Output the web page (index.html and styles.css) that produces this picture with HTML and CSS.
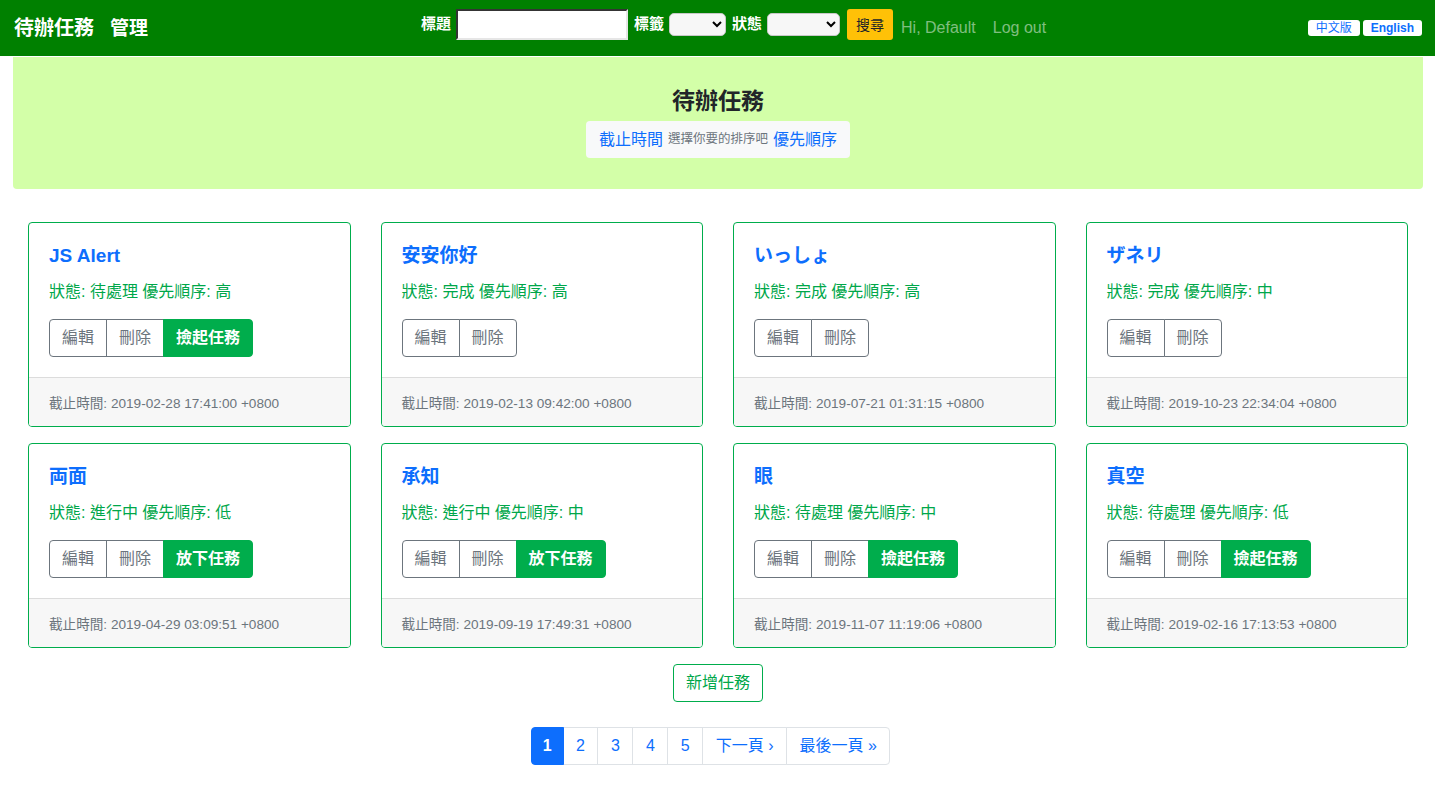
FILE: index.html
```html
<!DOCTYPE html>
<html lang="zh-Hant">
<head>
<meta charset="utf-8">
<title>待辦任務</title>
<link rel="stylesheet" href="styles.css">
</head>
<body>
<nav class="navbar">
  <a class="brand" href="#">待辦任務</a>
  <a class="nav-main" href="#">管理</a>
  <form class="search">
    <label class="lbl">標題</label>
    <input class="txt" type="text">
    <label class="lbl">標籤</label>
    <select class="sel sel-tag"><option></option></select>
    <label class="lbl">狀態</label>
    <select class="sel sel-state"><option></option></select>
    <button class="btn-search" type="button">搜尋</button>
  </form>
  <span class="nav-link">Hi, Default</span>
  <a class="nav-link" href="#">Log out</a>
  <div class="lang">
    <a class="lang-btn" href="#">中文版</a>
    <a class="lang-btn lang-en" href="#">English</a>
  </div>
</nav>

<header class="jumbo">
  <h1 class="jumbo-title">待辦任務</h1>
  <div class="sort-box">
    <a href="#" class="sort-link">截止時間</a>
    <small class="sort-hint">選擇你要的排序吧</small>
    <a href="#" class="sort-link">優先順序</a>
  </div>
</header>

<main class="content">
  <div class="cards">
    <div class="card">
      <div class="card-body">
        <h5 class="card-title">JS Alert</h5>
        <p class="card-status">狀態: 待處理 優先順序: 高</p>
        <div class="btn-group"><a class="btn btn-outline">編輯</a><a class="btn btn-outline">刪除</a><a class="btn btn-success">撿起任務</a></div>
      </div>
      <div class="card-footer">截止時間: 2019-02-28 17:41:00 +0800</div>
    </div>
    <div class="card">
      <div class="card-body">
        <h5 class="card-title">安安你好</h5>
        <p class="card-status">狀態: 完成 優先順序: 高</p>
        <div class="btn-group"><a class="btn btn-outline">編輯</a><a class="btn btn-outline">刪除</a></div>
      </div>
      <div class="card-footer">截止時間: 2019-02-13 09:42:00 +0800</div>
    </div>
    <div class="card">
      <div class="card-body">
        <h5 class="card-title">いっしょ</h5>
        <p class="card-status">狀態: 完成 優先順序: 高</p>
        <div class="btn-group"><a class="btn btn-outline">編輯</a><a class="btn btn-outline">刪除</a></div>
      </div>
      <div class="card-footer">截止時間: 2019-07-21 01:31:15 +0800</div>
    </div>
    <div class="card">
      <div class="card-body">
        <h5 class="card-title">ザネリ</h5>
        <p class="card-status">狀態: 完成 優先順序: 中</p>
        <div class="btn-group"><a class="btn btn-outline">編輯</a><a class="btn btn-outline">刪除</a></div>
      </div>
      <div class="card-footer">截止時間: 2019-10-23 22:34:04 +0800</div>
    </div>
    <div class="card">
      <div class="card-body">
        <h5 class="card-title">両面</h5>
        <p class="card-status">狀態: 進行中 優先順序: 低</p>
        <div class="btn-group"><a class="btn btn-outline">編輯</a><a class="btn btn-outline">刪除</a><a class="btn btn-success">放下任務</a></div>
      </div>
      <div class="card-footer">截止時間: 2019-04-29 03:09:51 +0800</div>
    </div>
    <div class="card">
      <div class="card-body">
        <h5 class="card-title">承知</h5>
        <p class="card-status">狀態: 進行中 優先順序: 中</p>
        <div class="btn-group"><a class="btn btn-outline">編輯</a><a class="btn btn-outline">刪除</a><a class="btn btn-success">放下任務</a></div>
      </div>
      <div class="card-footer">截止時間: 2019-09-19 17:49:31 +0800</div>
    </div>
    <div class="card">
      <div class="card-body">
        <h5 class="card-title">眼</h5>
        <p class="card-status">狀態: 待處理 優先順序: 中</p>
        <div class="btn-group"><a class="btn btn-outline">編輯</a><a class="btn btn-outline">刪除</a><a class="btn btn-success">撿起任務</a></div>
      </div>
      <div class="card-footer">截止時間: 2019-11-07 11:19:06 +0800</div>
    </div>
    <div class="card">
      <div class="card-body">
        <h5 class="card-title">真空</h5>
        <p class="card-status">狀態: 待處理 優先順序: 低</p>
        <div class="btn-group"><a class="btn btn-outline">編輯</a><a class="btn btn-outline">刪除</a><a class="btn btn-success">撿起任務</a></div>
      </div>
      <div class="card-footer">截止時間: 2019-02-16 17:13:53 +0800</div>
    </div>
  </div>

  <div class="add-row"><a class="btn-add" href="#">新增任務</a></div>

  <nav class="pager">
    <span class="page active">1</span><a class="page" href="#">2</a><a class="page" href="#">3</a><a class="page" href="#">4</a><a class="page" href="#">5</a><a class="page" href="#">下一頁 ›</a><a class="page" href="#">最後一頁 »</a>
  </nav>
</main>
</body>
</html>
```

FILE: styles.css
```css
* { box-sizing: border-box; }

body {
  margin: 0;
  font-family: "Liberation Sans", "Noto Sans CJK TC", sans-serif;
  font-size: 16px;
  line-height: 1.5;
  color: #212529;
  background: #fff;
}

a { text-decoration: none; }

.navbar {
  height: 56px;
  background: #008000;
  display: flex;
  align-items: center;
  padding: 0 13px 0 14px;
}

.brand {
  color: #fff;
  font-size: 20px;
  font-weight: bold;
  line-height: 1;
}

.nav-main {
  color: #fff;
  font-size: 19px;
  font-weight: bold;
  margin-left: 16px;
  line-height: 1;
}

.search {
  display: flex;
  align-items: center;
  margin-left: 273px;
  margin-top: -8px;
}

.lbl {
  color: #fff;
  font-size: 15px;
  font-weight: bold;
  margin-right: 5px;
}

.txt {
  width: 172px;
  height: 31px;
  border: 2px inset #ddd;
  border-color: #888 #e6e6e6 #e6e6e6 #888;
  background: #fff;
  margin: 0 6px 0 0;
  padding: 2px 4px;
}

.sel {
  height: 23px;
  border: 1px solid #c8c8c8;
  border-radius: 5px;
  background: #f7f7f7;
  margin-right: 6px;
  font-size: 12px;
}

.sel-tag { width: 57px; }
.sel-state { width: 73px; }

.btn-search {
  background: #ffc107;
  border: none;
  border-radius: 3px;
  height: 31px;
  width: 46px;
  padding: 0;
  font-family: inherit;
  font-size: 14px;
  color: #212529;
  margin-left: 1px;
}

.nav-link {
  color: rgba(255, 255, 255, 0.5);
  font-size: 16px;
  margin-left: 8px;
  padding: 0 8px 0 0;
  margin-top: -1px;
}

.nav-link + .nav-link { margin-left: 9px; }

.lang {
  margin-left: auto;
  display: flex;
  gap: 3px;
}

.lang-btn {
  background: #fff;
  color: #0d6efd;
  font-size: 12px;
  line-height: 16px;
  height: 16px;
  border-radius: 3px;
  padding: 0 8px;
}

.lang-en { font-weight: bold; }

.jumbo {
  margin: 1px 12px 0 13px;
  background: #d3ffa8;
  border-radius: 0 0 4px 4px;
  padding: 30px 0 31px;
  display: flex;
  flex-direction: column;
  align-items: center;
}

.jumbo-title {
  margin: 0 0 5px;
  font-size: 23px;
  font-weight: 600;
  line-height: 29px;
  color: #212529;
}

.sort-box {
  background: #f8f9fa;
  border-radius: 4px;
  padding: 0 13px;
  height: 37px;
  display: flex;
  align-items: center;
  gap: 5px;
}

.sort-link {
  color: #0d6efd;
  font-size: 16px;
}

.sort-hint {
  font-size: 12.5px;
  color: #6c757d;
}

.content {
  padding: 33px 27px 20px 28px;
}

.cards {
  display: grid;
  grid-template-columns: repeat(4, 1fr);
  column-gap: 30px;
  row-gap: 16px;
}

.card {
  border: 1px solid #00ad4c;
  border-radius: 4px;
  overflow: hidden;
  background: #fff;
}

.card-body {
  padding: 21px 20px 20px;
}

.card-title {
  margin: 0 0 12px;
  font-size: 19px;
  font-weight: 600;
  line-height: 24px;
  color: #0d6efd;
}

.card-status {
  margin: 0 0 15px;
  color: #00a74a;
  font-size: 16px;
  line-height: 24px;
}

.btn-group {
  display: inline-flex;
}

.btn {
  display: inline-block;
  font-size: 16px;
  line-height: 24px;
  padding: 6px 12px;
  border: 1px solid #6c757d;
}

.btn-outline {
  color: #6c757d;
  background: #fff;
}

.btn-outline:first-child {
  border-radius: 4px 0 0 4px;
}

.btn-outline + .btn-outline {
  margin-left: -1px;
}

.btn-outline:nth-child(2):last-child {
  border-radius: 0 4px 4px 0;
}

.btn-success {
  background: #00ad4c;
  border-color: #00ad4c;
  color: #fff;
  font-weight: bold;
  border-radius: 0 4px 4px 0;
  margin-left: -1px;
}

.card-footer {
  border-top: 1px solid #dcdcdc;
  background: #f7f7f7;
  padding: 14px 20px 10px;
  font-size: 13.6px;
  line-height: 24px;
  color: #6c757d;
}

.add-row {
  display: flex;
  justify-content: center;
  margin-top: 16px;
}

.btn-add {
  display: inline-block;
  border: 1px solid #00ad4c;
  border-radius: 4px;
  color: #00a74a;
  font-size: 16px;
  line-height: 24px;
  padding: 6px 12px;
}

.pager {
  display: flex;
  justify-content: center;
  margin-top: 25px;
  padding-right: 15px;
}

.page {
  display: inline-block;
  border: 1px solid #dee2e6;
  margin-left: -1px;
  padding: 6px 12.5px;
  line-height: 24px;
  font-size: 16px;
  color: #0d6efd;
  background: #fff;
}

.page:first-child {
  margin-left: 0;
  border-radius: 4px 0 0 4px;
  padding: 6px 11px;
}

.page:last-child {
  border-radius: 0 4px 4px 0;
}

.page.active {
  background: #0d6efd;
  border-color: #0d6efd;
  color: #fff;
  font-weight: bold;
  position: relative;
}
```
